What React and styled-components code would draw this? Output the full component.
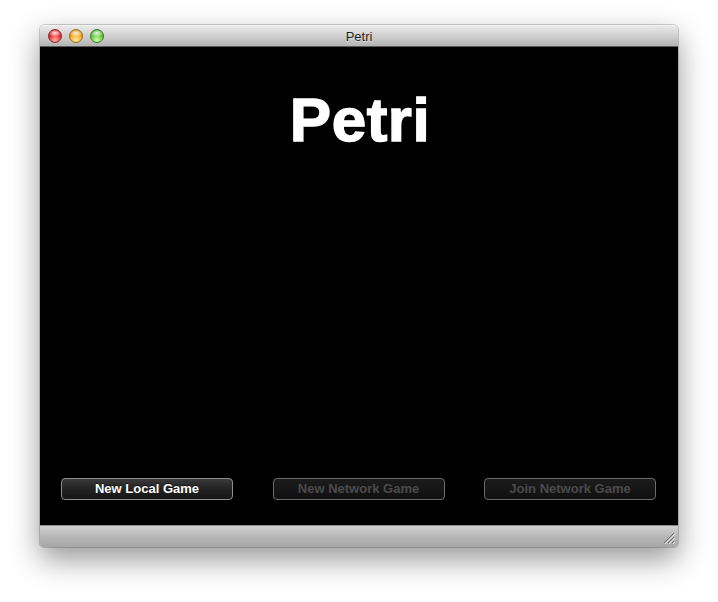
import React from "react";
import styled, { createGlobalStyle } from "styled-components";

const Global = createGlobalStyle`
  html, body { margin: 0; padding: 0; background: #ffffff; }
  body { font-family: "Liberation Sans", Arial, sans-serif; }
`;

const Page = styled.div`
  width: 718px;
  height: 602px;
  padding: 25px 40px 0 40px;
  box-sizing: border-box;
  background: #fff;
`;

const Window = styled.div`
  width: 638px;
  height: 522px;
  display: flex;
  flex-direction: column;
  border-radius: 5px 5px 4px 4px;
  overflow: hidden;
  box-shadow: 0 12px 30px rgba(0, 0, 0, 0.42), 0 0 0 1px rgba(0, 0, 0, 0.18);
`;

const TitleBar = styled.div`
  height: 22px;
  flex: none;
  position: relative;
  display: flex;
  align-items: center;
  justify-content: center;
  background: linear-gradient(#e9e9e9, #d2d2d2 45%, #b4b4b4);
  border-bottom: 1px solid #5c5c5c;
  border-top: 1px solid #f4f4f4;
  box-sizing: border-box;
`;

const Lights = styled.div`
  position: absolute;
  left: 8px;
  top: 3px;
  display: flex;
  gap: 7px;
`;

const Light = styled.span`
  width: 14px;
  height: 14px;
  border-radius: 50%;
  box-sizing: border-box;
  border: 1px solid ${(p) => p.$edge};
  background:
    radial-gradient(ellipse 7px 4px at 50% 25%, rgba(255,255,255,0.9), rgba(255,255,255,0) 100%),
    radial-gradient(circle at 50% 85%, ${(p) => p.$glow} 0%, ${(p) => p.$mid} 55%, ${(p) => p.$dark} 100%);
`;

const WindowTitle = styled.span`
  font-family: "Liberation Sans", Arial, sans-serif;
  font-size: 13px;
  color: #1e1e1e;
  text-shadow: 0 1px 0 rgba(255, 255, 255, 0.5);
  padding-top: 1px;
`;

const Content = styled.div`
  flex: 1;
  background: #000;
  display: flex;
  flex-direction: column;
  justify-content: space-between;
`;

const Heading = styled.h1`
  margin: 42px 0 0 0;
  text-align: center;
  font-family: "Liberation Sans", Arial, sans-serif;
  font-weight: 700;
  font-size: 62px;
  line-height: 62px;
  color: #fff;
  letter-spacing: 0.5px;
  -webkit-text-stroke: 1.4px #fff;
  padding-left: 2px;
`;

const ButtonRow = styled.div`
  display: flex;
  justify-content: space-between;
  padding: 0 22px 25px 21px;
`;

const Button = styled.button`
  width: 172px;
  height: 22px;
  box-sizing: border-box;
  border-radius: 4px;
  border: 1px solid ${(p) => (p.disabled ? "#6b6b6b" : "#8e8e8e")};
  background: ${(p) =>
    p.disabled
      ? "linear-gradient(#1c1c1c, #101010)"
      : "linear-gradient(#3a3a3a, #222 50%, #161616)"};
  color: ${(p) => (p.disabled ? "#4b4b4b" : "#ffffff")};
  font-family: "Liberation Sans", Arial, sans-serif;
  font-weight: 700;
  font-size: 13px;
  line-height: 20px;
  padding: 0;
  text-shadow: ${(p) => (p.disabled ? "none" : "0 -1px 0 rgba(0,0,0,0.6)")};
`;

const BottomBar = styled.div`
  height: 22px;
  flex: none;
  display: flex;
  justify-content: flex-end;
  align-items: flex-end;
  background: linear-gradient(#cfcfcf, #b8b8b8 50%, #a6a6a6);
  border-top: 1px solid #8a8a8a;
  box-sizing: border-box;
`;

const Grip = styled.svg`
  display: block;
  margin: 0 3px 3px 0;
`;

export default function App() {
  return (
    <>
      <Global />
      <Page>
        <Window>
          <TitleBar>
            <Lights>
              <Light $edge="#8c2a2a" $glow="#ffb0a8" $mid="#e8242c" $dark="#a8101a" />
              <Light $edge="#9a6a1a" $glow="#fff0a0" $mid="#f5a21a" $dark="#c06a08" />
              <Light $edge="#3f7a22" $glow="#d8ffb0" $mid="#5cc236" $dark="#2f8a18" />
            </Lights>
            <WindowTitle>Petri</WindowTitle>
          </TitleBar>
          <Content>
            <Heading>Petri</Heading>
            <ButtonRow>
              <Button>New Local Game</Button>
              <Button disabled>New Network Game</Button>
              <Button disabled>Join Network Game</Button>
            </ButtonRow>
          </Content>
          <BottomBar>
            <Grip width="12" height="12" viewBox="0 0 12 12">
              <g stroke="#6a6a6a" strokeWidth="1">
                <line x1="11" y1="1" x2="1" y2="11" />
                <line x1="11" y1="5" x2="5" y2="11" />
                <line x1="11" y1="9" x2="9" y2="11" />
              </g>
              <g stroke="#e8e8e8" strokeWidth="1">
                <line x1="12" y1="2" x2="2" y2="12" />
                <line x1="12" y1="6" x2="6" y2="12" />
                <line x1="12" y1="10" x2="10" y2="12" />
              </g>
            </Grip>
          </BottomBar>
        </Window>
      </Page>
    </>
  );
}
